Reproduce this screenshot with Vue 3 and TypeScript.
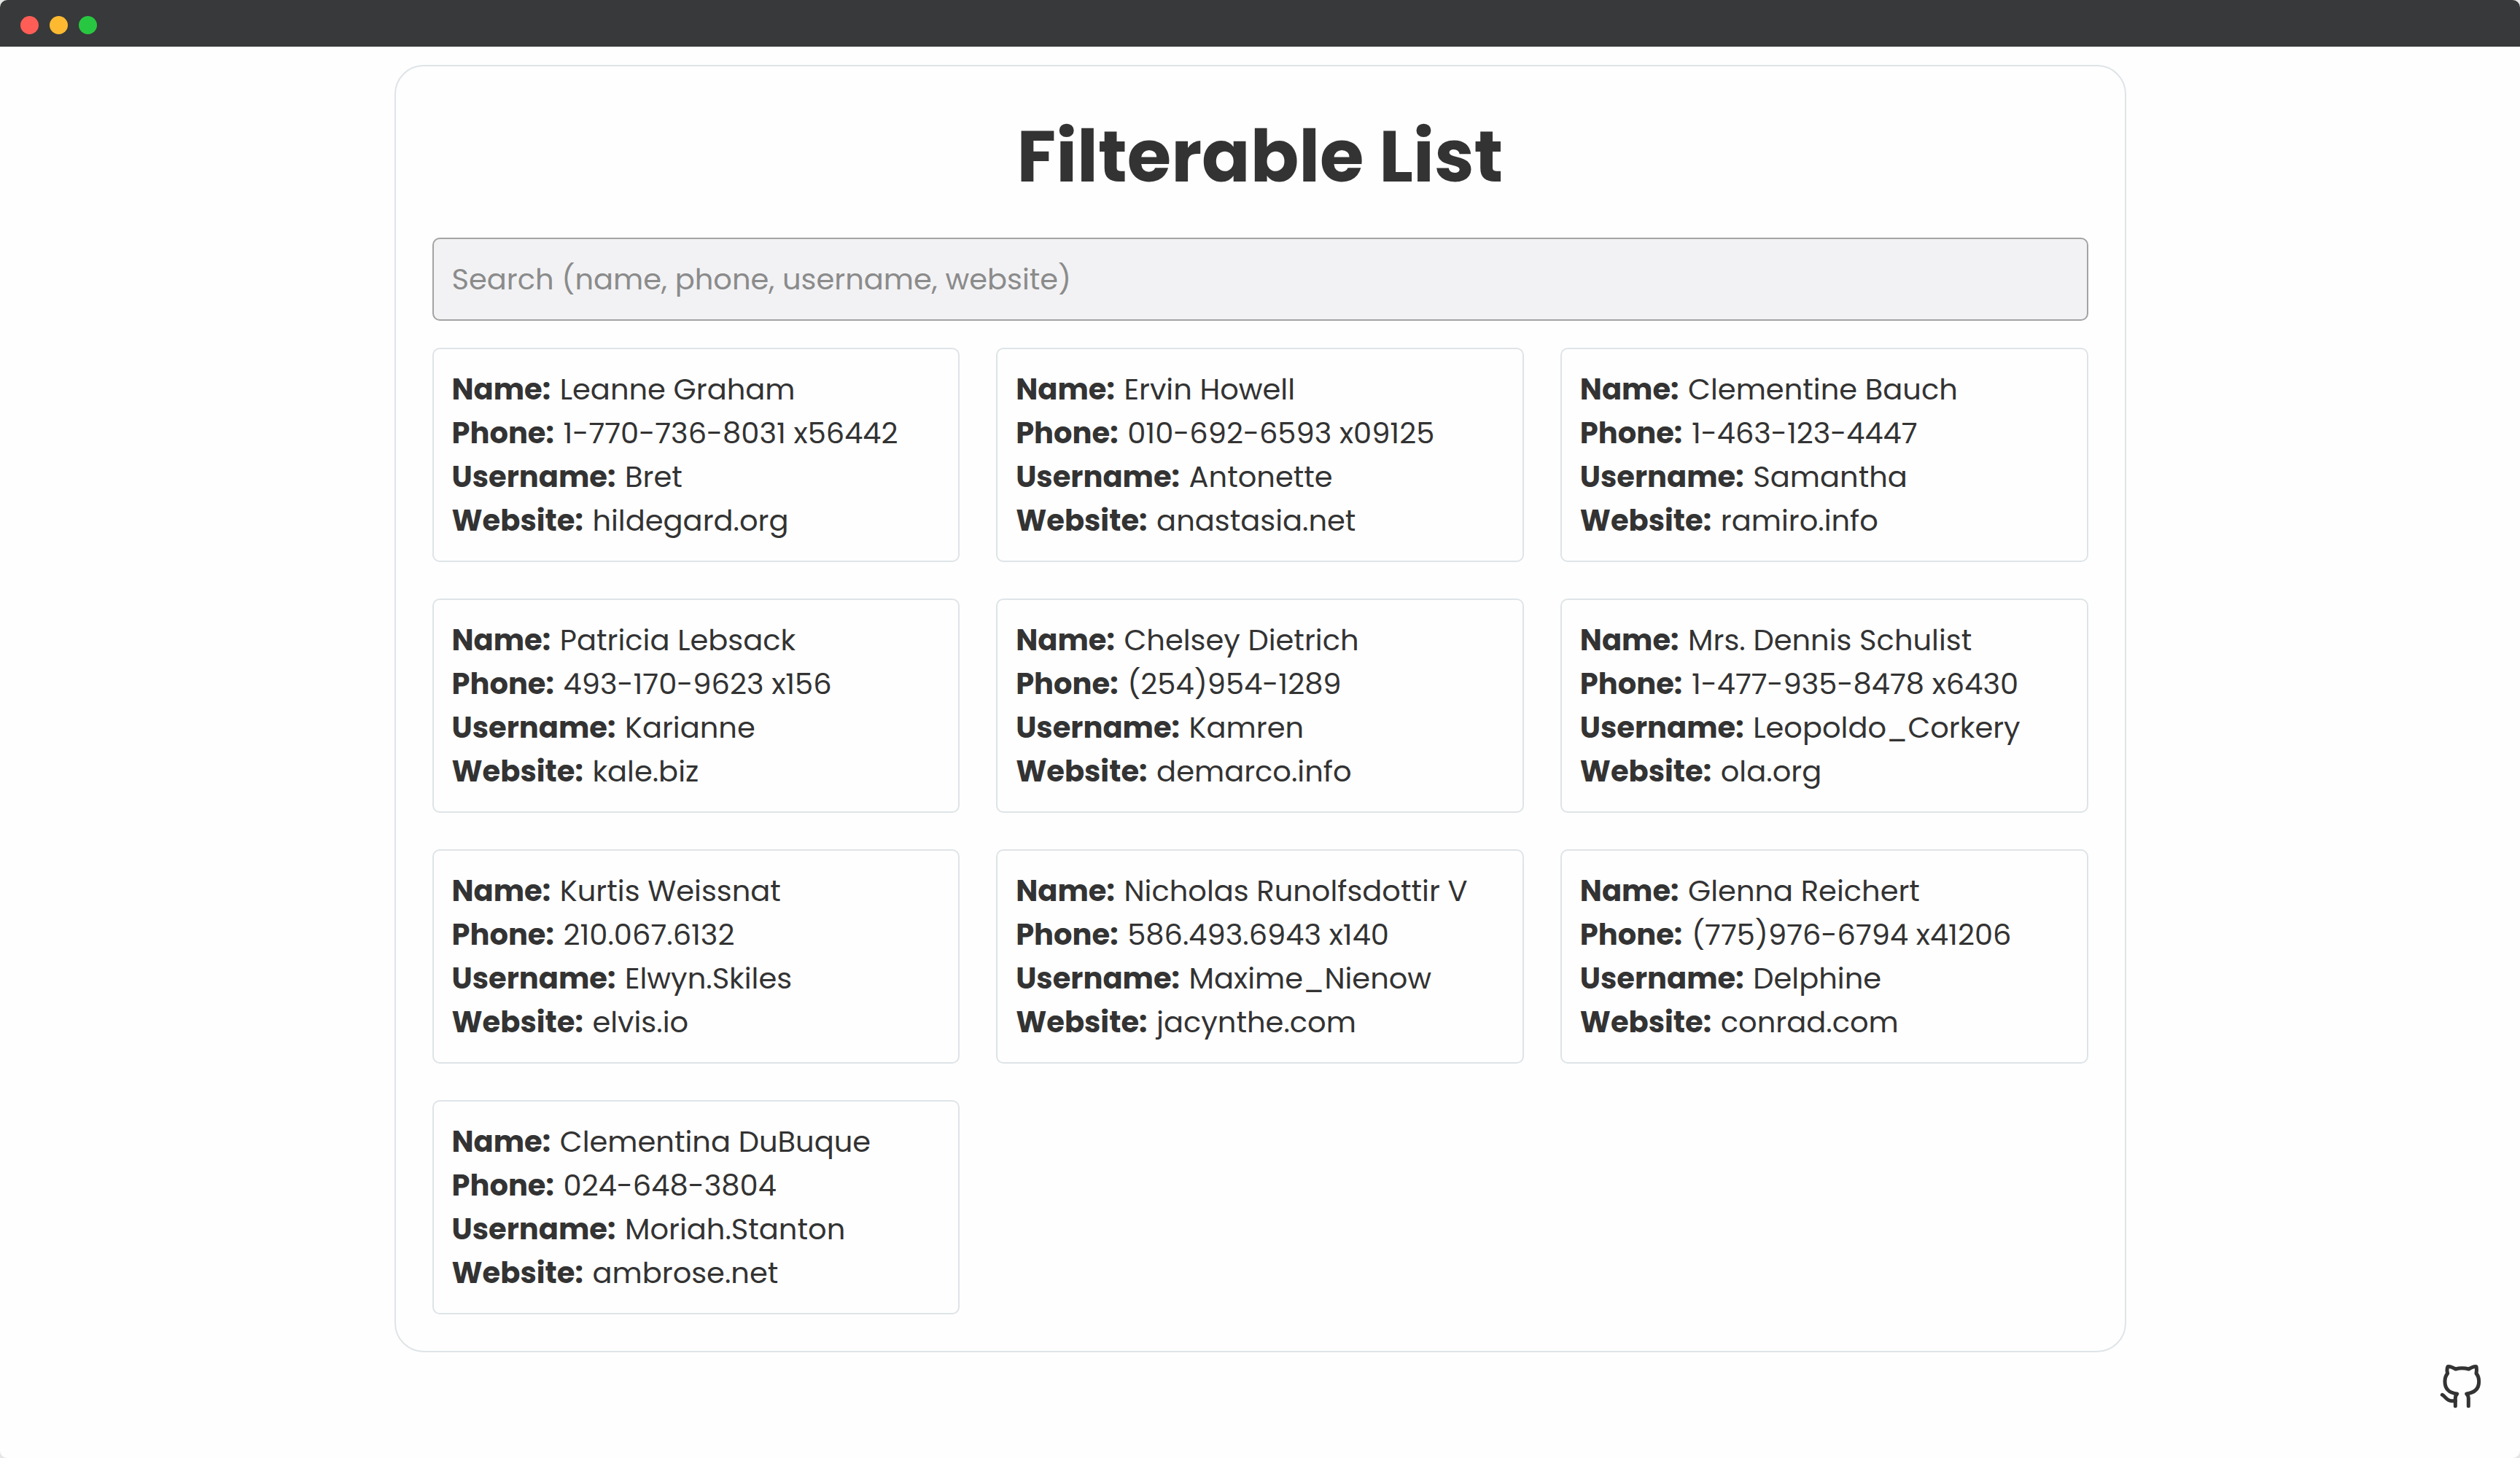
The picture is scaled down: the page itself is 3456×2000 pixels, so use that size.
<script setup lang="ts">
import { computed, ref } from 'vue'

interface User {
  name: string
  phone: string
  username: string
  website: string
}

const users: User[] = [
  { name: 'Leanne Graham', phone: '1-770-736-8031 x56442', username: 'Bret', website: 'hildegard.org' },
  { name: 'Ervin Howell', phone: '010-692-6593 x09125', username: 'Antonette', website: 'anastasia.net' },
  { name: 'Clementine Bauch', phone: '1-463-123-4447', username: 'Samantha', website: 'ramiro.info' },
  { name: 'Patricia Lebsack', phone: '493-170-9623 x156', username: 'Karianne', website: 'kale.biz' },
  { name: 'Chelsey Dietrich', phone: '(254)954-1289', username: 'Kamren', website: 'demarco.info' },
  { name: 'Mrs. Dennis Schulist', phone: '1-477-935-8478 x6430', username: 'Leopoldo_Corkery', website: 'ola.org' },
  { name: 'Kurtis Weissnat', phone: '210.067.6132', username: 'Elwyn.Skiles', website: 'elvis.io' },
  { name: 'Nicholas Runolfsdottir V', phone: '586.493.6943 x140', username: 'Maxime_Nienow', website: 'jacynthe.com' },
  { name: 'Glenna Reichert', phone: '(775)976-6794 x41206', username: 'Delphine', website: 'conrad.com' },
  { name: 'Clementina DuBuque', phone: '024-648-3804', username: 'Moriah.Stanton', website: 'ambrose.net' },
]

const query = ref('')

const filtered = computed(() => {
  const q = query.value.trim().toLowerCase()
  return users.filter((u) => Object.values(u).some((v) => v.toLowerCase().includes(q)))
})
</script>

<template>
  <div class="window">
    <header class="titlebar">
      <span class="dot red"></span>
      <span class="dot yellow"></span>
      <span class="dot green"></span>
    </header>

    <main class="panel">
      <h1>Filterable List</h1>
      <input
        v-model="query"
        class="search"
        type="text"
        aria-label="Search"
        placeholder="Search (name, phone, username, website)"
      />
      <ul class="cards">
        <li v-for="user in filtered" :key="user.username" class="card">
          <p><strong>Name:</strong> {{ user.name }}</p>
          <p><strong>Phone:</strong> {{ user.phone }}</p>
          <p><strong>Username:</strong> {{ user.username }}</p>
          <p><strong>Website:</strong> {{ user.website }}</p>
        </li>
      </ul>
    </main>

    <a class="github" href="#" aria-label="GitHub">
      <svg viewBox="138 153 171 183" fill="none" stroke="currentColor" stroke-width="15" stroke-linecap="round" stroke-linejoin="round">
        <path d="M202 326V293Q202 284 209 276C179 272 159 259 159 225C159 210 163 200 170 192C167 181 167 172 171 164Q180 161 203 174Q229 167 257 174Q279 161 288 164C290 172 290 181 288 192C295 200 299 212 299 225C299 259 278 272 248 276Q256 284 256 293V326" />
        <path d="M148 280C161 286 166 305 187 305H202" />
      </svg>
    </a>
  </div>
</template>

<style>
body {
  margin: 0;
  background: #e6e6e6;
}
</style>

<style scoped>
.window {
  min-height: 100vh;
  border-radius: 10px;
  overflow: hidden;
  background: #fefefe;
  color: #333333;
  font-family: Poppins, Inter, sans-serif;
  font-size: 40px;
  line-height: 60px;
}

.titlebar {
  display: flex;
  align-items: center;
  gap: 15px;
  box-sizing: border-box;
  height: 64px;
  padding: 4px 28px 0;
  background: #38393a;
}

.dot {
  width: 25px;
  height: 25px;
  border-radius: 50%;
}

.red {
  background: #ff5d55;
}

.yellow {
  background: #fdba30;
}

.green {
  background: #28c741;
}

.panel {
  box-sizing: border-box;
  max-width: 2375px;
  margin: 25px auto;
  padding: 50px;
  border: 2px solid #dee4e7;
  border-radius: 40px;
}

h1 {
  margin: 0 0 37px;
  font-size: 98px;
  line-height: 148px;
  font-weight: 700;
  text-align: center;
}

.search {
  display: block;
  box-sizing: border-box;
  width: 100%;
  height: 114px;
  margin: 0 0 37px;
  padding: 25px;
  border: 2px solid #a3a3a3;
  border-radius: 10px;
  background: #f2f2f4;
  color: inherit;
  font: inherit;
}

.search::placeholder {
  color: #8b8b8b;
  opacity: 1;
}

.cards {
  display: grid;
  grid-template-columns: repeat(3, 1fr);
  gap: 50px;
  margin: 0;
  padding: 0;
  list-style: none;
}

.card {
  padding: 25px;
  border: 2px solid #dee4e7;
  border-radius: 10px;
}

.card p {
  margin: 0;
}

.card strong {
  margin-right: 2px;
  font-weight: 700;
}

.github {
  position: fixed;
  right: 53px;
  bottom: 68px;
  color: #333333;
}

.github svg {
  display: block;
  width: 57px;
  height: 61px;
}
</style>
